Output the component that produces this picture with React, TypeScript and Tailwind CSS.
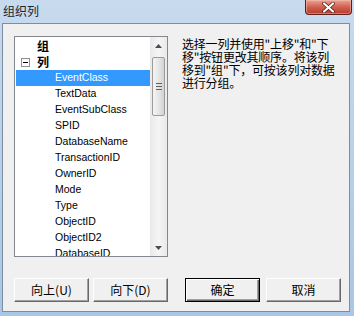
import React from 'react';

const items = [
  'EventClass',
  'TextData',
  'EventSubClass',
  'SPID',
  'DatabaseName',
  'TransactionID',
  'OwnerID',
  'Mode',
  'Type',
  'ObjectID',
  'ObjectID2',
  'DatabaseID',
];

const cjk = "font-['Noto_Sans_CJK_SC','Microsoft_YaHei',sans-serif]";

function CloseButton() {
  return (
    <div className="mr-[2px] flex h-[15px] w-[47px] items-center justify-center rounded-b-[4px] border border-t-0 border-[#5d2018] bg-gradient-to-b from-[#e9a395] via-[#d2604f] to-[#b8392a] shadow-[inset_0_0_0_1px_rgba(255,200,190,0.45)]">
      <svg width="13" height="11" viewBox="0 0 13 11">
        <path d="M2 1.5 L11 9.5 M11 1.5 L2 9.5" stroke="#4a1a12" strokeWidth="3.6" strokeLinecap="round" />
        <path d="M2 1.5 L11 9.5 M11 1.5 L2 9.5" stroke="#ffffff" strokeWidth="2.2" strokeLinecap="round" />
      </svg>
    </div>
  );
}

function Scrollbar() {
  return (
    <div className="flex h-full w-[17px] flex-col bg-[#f0f0f0] bg-gradient-to-r from-[#e9e9e9] via-[#f5f5f5] to-[#eaeaea]">
      {/* up */}
      <div className="flex h-[17px] items-center justify-center">
        <svg width="7" height="4" viewBox="0 0 7 4">
          <path d="M3.5 0 L7 4 L0 4 Z" fill="#4d4d4d" />
        </svg>
      </div>
      {/* thumb */}
      <div className="mx-[2px] mt-[3px] flex h-[59px] flex-col items-center justify-center gap-[2px] rounded-[2px] border border-[#9b9b9b] bg-gradient-to-r from-[#f4f4f4] via-[#e6e6e6] to-[#d3d3d3]">
        <div className="h-px w-[6px] bg-[#5f5f5f]" />
        <div className="h-px w-[6px] bg-[#5f5f5f]" />
        <div className="h-px w-[6px] bg-[#5f5f5f]" />
      </div>
      <div className="flex-1" />
      {/* down */}
      <div className="flex h-[17px] items-center justify-center">
        <svg width="7" height="4" viewBox="0 0 7 4">
          <path d="M0 0 L7 0 L3.5 4 Z" fill="#4d4d4d" />
        </svg>
      </div>
    </div>
  );
}

function ColumnList() {
  return (
    <div className="flex h-[221px] w-[154px] border border-[#828790] bg-white">
      <div className="flex-1 overflow-hidden pt-px pl-px">
        <div className="flex h-[16px] items-center pl-[21px]">
          <span className={`${cjk} text-[12px] font-bold leading-none text-black`}>组</span>
        </div>
        <div className="relative flex h-[16px] items-center pl-[21px]">
          <div className="absolute top-[4px] left-[5px] flex h-[9px] w-[9px] items-center justify-center border border-[#919191] bg-white">
            <div className="h-px w-[5px] bg-black" />
          </div>
          <span className={`${cjk} text-[12px] font-bold leading-none text-black`}>列</span>
        </div>
        {items.map((item, i) => (
          <div
            key={item}
            className={`flex h-[16px] items-center pl-[39px] font-['Liberation_Sans',Arial,sans-serif] text-[10.5px] ${
              i === 0 ? 'bg-[#3399ff] text-white' : 'text-black'
            }`}
          >
            {item}
          </div>
        ))}
      </div>
      <Scrollbar />
    </div>
  );
}

function WinButton({ label, isDefault }: { label: React.ReactNode; isDefault?: boolean }) {
  return (
    <button
      className={`flex h-[24px] w-[75px] items-center justify-center bg-[#f0f0f0] ${cjk} text-[12px] text-black ${
        isDefault
          ? 'border border-[#000] shadow-[inset_1px_1px_0_#ffffff,inset_-1px_-1px_0_#696969,inset_-2px_-2px_0_#a0a0a0]'
          : 'border border-t-white border-l-white border-r-[#696969] border-b-[#696969] shadow-[inset_-1px_-1px_0_#a0a0a0]'
      }`}
    >
      {label}
    </button>
  );
}

export default function App() {
  return (
    <div className="flex h-[316px] w-[354px] flex-col overflow-hidden bg-gradient-to-b from-[#c8daee] via-[#b8d0ea] to-[#a9c6e6]">
      {/* title bar */}
      <div className="flex h-[23px] items-start justify-between">
        <span className={`${cjk} pt-[3px] pl-[3px] text-[12px] leading-[16px] text-[#1b2430]`}>组织列</span>
        <CloseButton />
      </div>

      {/* client area */}
      <div className="ml-[2px] h-[289px] w-[348px] border border-[#7d8da0] bg-[#f0f0f0] pt-[12px] pl-[11px]">
        <div className="flex gap-[14px]">
          <ColumnList />
          <p className={`${cjk} mt-[1px] text-[12px] leading-[13px] tracking-[-0.2px] text-black`}>
            选择一列并使用"上移"和"下
            <br />
            移"按钮更改其顺序。将该列
            <br />
            移到"组"下，可按该列对数据
            <br />
            进行分组。
          </p>
        </div>

        <div className="mt-[21px] flex">
          <WinButton label="向上(U)" />
          <div className="w-[4px]" />
          <WinButton label="向下(D)" />
          <div className="w-[17px]" />
          <WinButton label="确定" isDefault />
          <div className="w-[6px]" />
          <WinButton label="取消" />
        </div>
      </div>
    </div>
  );
}
